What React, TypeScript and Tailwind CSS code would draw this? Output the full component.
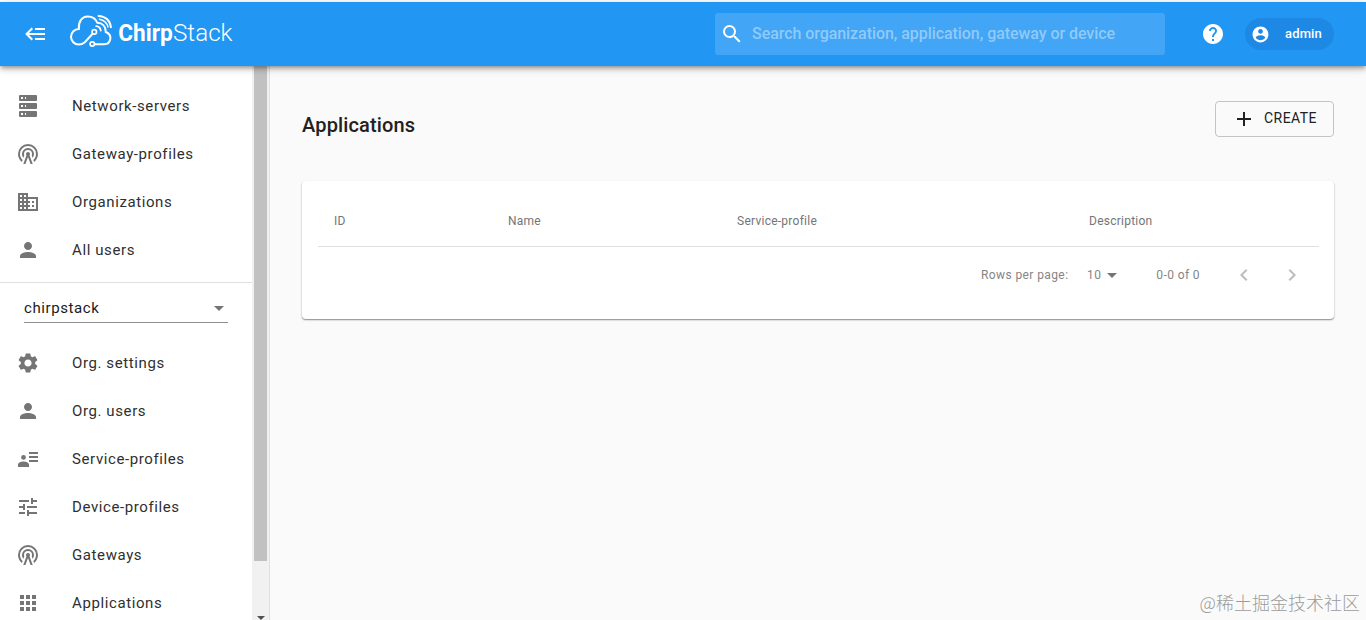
import type { ReactNode } from "react";
import {
  MdAdd,
  MdApps,
  MdArrowDropDown,
  MdChevronLeft,
  MdChevronRight,
  MdDomain,
  MdHelp,
  MdPerson,
  MdSearch,
  MdSettings,
  MdTune,
} from "react-icons/md";

function Glyph({ d, size = 24 }: { d: string; size?: number }) {
  return (
    <svg width={size} height={size} viewBox="0 0 24 24" fill="currentColor" className="shrink-0">
      <path d={d} />
    </svg>
  );
}

const serverPath =
  "M4,1H20A1,1 0 0,1 21,2V6A1,1 0 0,1 20,7H4A1,1 0 0,1 3,6V2A1,1 0 0,1 4,1M4,9H20A1,1 0 0,1 21,10V14A1,1 0 0,1 20,15H4A1,1 0 0,1 3,14V10A1,1 0 0,1 4,9M4,17H20A1,1 0 0,1 21,18V22A1,1 0 0,1 20,23H4A1,1 0 0,1 3,22V18A1,1 0 0,1 4,17M9,5H10V3H9V5M9,13H10V11H9V13M9,21H10V19H9V21M5,3V5H7V3H5M5,11V13H7V11H5M5,19V21H7V19H5Z";
const towerPath =
  "M12,10A2,2 0 0,1 14,12C14,12.5 13.82,12.94 13.53,13.29L16.7,22H14.57L12,14.93L9.43,22H7.3L10.47,13.29C10.18,12.94 10,12.5 10,12A2,2 0 0,1 12,10M12,8A4,4 0 0,0 8,12C8,12.5 8.1,13 8.28,13.46L7.4,15.86C6.53,14.81 6,13.47 6,12A6,6 0 0,1 12,6A6,6 0 0,1 18,12C18,13.47 17.47,14.81 16.6,15.86L15.72,13.46C15.9,13 16,12.5 16,12A4,4 0 0,0 12,8M12,4A8,8 0 0,0 4,12C4,14.36 5,16.5 6.64,17.94L5.92,19.94C3.54,18.11 2,15.23 2,12A10,10 0 0,1 12,2A10,10 0 0,1 22,12C22,15.23 20.46,18.11 18.08,19.94L17.36,17.94C19,16.5 20,14.36 20,12A8,8 0 0,0 12,4Z";
const detailsPath =
  "M7.5,8A2.4,2.4 0 0,1 9.9,10.4A2.4,2.4 0 0,1 7.5,12.8A2.4,2.4 0 0,1 5.1,10.4A2.4,2.4 0 0,1 7.5,8M7.5,14.5C11,14.5 13,16 13,17.5V20H2V17.5C2,16 4,14.5 7.5,14.5M22,13V15H13V13M22,9V11H13V9M22,5V7H13V5Z";
const backPath =
  "M5,13L9,17L7.6,18.42L1.18,12L7.6,5.58L9,7L5,11H21V13H5M21,6V8H11V6H21M21,16V18H11V16H21Z";
const accountPath =
  "M12 2C6.48 2 2 6.48 2 12s4.48 10 10 10 10-4.48 10-10S17.52 2 12 2zm0 3c1.66 0 3 1.34 3 3s-1.34 3-3 3-3-1.34-3-3 1.34-3 3-3zm0 14.2c-2.5 0-4.71-1.28-6-3.22.03-1.99 4-3.08 6-3.08 1.99 0 5.97 1.09 6 3.08-1.29 1.94-3.5 3.22-6 3.22z";

function Logo() {
  return (
    <div className="flex h-9 w-[166px] shrink-0 text-white">
      <svg width="166" height="36" viewBox="0 0 166 36" fill="none" stroke="currentColor" strokeWidth="2" strokeLinecap="round">
        <path d="M24.6 20.8 L16.8 29.2 C15 30.8 13 31.6 10.8 31.6 A7.8 7.8 0 0 1 10.9 15.9 C10.3 8.5 14 3.4 19.6 3.4 C24.5 3.4 27.8 5.6 29.4 9.8 C34.5 10 37.8 13.6 37.8 19 C41 20.2 42.6 22.6 42.4 25.4 C42 29.3 39.3 31.3 36 31.3 H26.6" />
        <circle cx="26.3" cy="18.9" r="2.2" strokeWidth="1.7" />
        <circle cx="24.3" cy="31" r="2.2" strokeWidth="1.7" />
        <path d="M28.2 13.2 C31 13.4 32.4 15.2 32.8 17.6" strokeWidth="1.8" />
        <path d="M30.6 2.9 C37 3 42.2 7.4 42.9 14.2" strokeWidth="2" />
        <path d="M31.4 6.2 C35.8 7 39 9.8 40 14" strokeWidth="1.4" />
        <text x="50.3" y="27.6" fill="currentColor" stroke="none" className="font-['Roboto',sans-serif] text-[23px] font-bold" textLength="54.5" lengthAdjust="spacingAndGlyphs">
          Chirp
        </text>
        <text x="105" y="27.6" fill="currentColor" stroke="none" className="font-['Roboto',sans-serif] text-[23px] font-light" textLength="59.5" lengthAdjust="spacingAndGlyphs">
          Stack
        </text>
      </svg>
    </div>
  );
}

function NavItem({ icon, label }: { icon: ReactNode; label: string }) {
  return (
    <li className="flex h-12 items-center gap-8 pl-4">
      <span className="flex size-6 text-[#757575]">{icon}</span>
      <span className="text-[15px] tracking-[0.6px] text-[#2f2f2f]">{label}</span>
    </li>
  );
}

function Header() {
  return (
    <header className="relative z-10 mt-0.5 flex h-16 shrink-0 items-center bg-[#2196f3] pl-6 text-white shadow-[0_2px_4px_-1px_rgba(0,0,0,0.3),0_4px_5px_0_rgba(0,0,0,0.14),0_1px_10px_0_rgba(0,0,0,0.12)]">
      <Glyph d={backPath} />
      <div className="-mt-1.5 ml-5">
        <Logo />
      </div>
      <div className="ml-auto flex h-[42px] w-[450px] items-center rounded-[3px] bg-[#42a5f5] pl-[5px]">
        <MdSearch size={24} />
        <span className="ml-2 text-[16px] font-medium tracking-[-0.06px] text-[#90caf9]">
          Search organization, application, gateway or device
        </span>
      </div>
      <MdHelp size={24} className="ml-9" />
      <div className="mr-8 ml-5 flex h-8 w-[89px] items-center rounded-full bg-[#1e88e5] pl-1.5">
        <Glyph d={accountPath} size={19} />
        <span className="ml-[15px] text-[13px] font-medium tracking-[0.15px]">admin</span>
      </div>
    </header>
  );
}

function Sidebar() {
  return (
    <aside className="flex w-[270px] shrink-0 overflow-hidden border-r border-[#e0e0e0] bg-white">
      <nav className="w-[252px] shrink-0 pt-2">
        <ul className="border-b border-[#e0e0e0] py-2">
          <NavItem icon={<Glyph d={serverPath} />} label="Network-servers" />
          <NavItem icon={<Glyph d={towerPath} />} label="Gateway-profiles" />
          <NavItem icon={<MdDomain size={24} />} label="Organizations" />
          <NavItem icon={<MdPerson size={24} />} label="All users" />
        </ul>
        <div className="mx-6 mt-2 flex h-8 items-center justify-between border-b border-[#8e8e8e] pt-[3px]">
          <span className="text-[15px] tracking-[0.6px] text-[#1a1a1a]">chirpstack</span>
          <MdArrowDropDown size={24} className="-mr-[3px] text-[#757575]" />
        </div>
        <ul className="pt-4">
          <NavItem icon={<MdSettings size={24} />} label="Org. settings" />
          <NavItem icon={<MdPerson size={24} />} label="Org. users" />
          <NavItem icon={<Glyph d={detailsPath} />} label="Service-profiles" />
          <NavItem icon={<MdTune size={24} />} label="Device-profiles" />
          <NavItem icon={<Glyph d={towerPath} />} label="Gateways" />
          <NavItem icon={<MdApps size={24} />} label="Applications" />
        </ul>
      </nav>
      <div className="flex w-[17px] flex-col items-center bg-[#f1f1f1]">
        <div className="h-[495px] w-[13px] shrink-0 bg-[#c1c1c1]" />
        <svg width="8" height="4" viewBox="0 0 8 4" className="mt-[55px] shrink-0">
          <path d="M0 0H8L4 4Z" fill="#505050" />
        </svg>
      </div>
    </aside>
  );
}

export default function App() {
  return (
    <div className="flex h-[620px] w-[1366px] flex-col overflow-hidden bg-white font-['Roboto',sans-serif]">
      <Header />
      <div className="flex min-h-0 flex-1">
        <Sidebar />
        <main className="flex flex-1 flex-col bg-[#fafafa] pr-8 pl-8">
          <div className="flex items-start justify-between pt-[35px]">
            <h1 className="mt-[9px] text-[20px] leading-[30px] font-medium tracking-[0.15px] text-[#212121]">Applications</h1>
            <button className="flex h-9 w-[119px] items-center rounded-[4px] border border-[#c4c4c4] pl-4 text-[#212121]">
              <MdAdd size={24} />
              <span className="-mt-px ml-2 text-[14px] tracking-[0.45px]">CREATE</span>
            </button>
          </div>
          <section className="mt-[41px] h-[138px] rounded-[4px] bg-white pr-[15px] pl-4 pt-2.5 shadow-[0_1px_1px_0_rgba(0,0,0,0.2),0_1px_2px_0_rgba(0,0,0,0.3)]">
            <div className="grid h-[56px] grid-cols-[174px_229px_352px_1fr] items-center border-b border-[#e0e0e0] pt-[5px] pl-4 text-[12px] tracking-[0.25px] text-[#757575]">
              <span>ID</span>
              <span>Name</span>
              <span>Service-profile</span>
              <span>Description</span>
            </div>
            <div className="flex h-14 items-center pl-[663px] text-[12px] tracking-[0.4px] text-[#858585]">
              <span className="w-[106px]">Rows per page:</span>
              <span>10</span>
              <MdArrowDropDown size={24} className="-ml-px text-[#757575]" />
              <span className="ml-8 w-[76px]">0-0 of 0</span>
              <MdChevronLeft size={24} className="shrink-0 text-[#bdbdbd]" />
              <MdChevronRight size={24} className="ml-6 shrink-0 text-[#bdbdbd]" />
            </div>
          </section>
          <footer className="mt-auto -mr-[26px] mb-1.5 self-end font-['Noto_Sans_CJK_SC',sans-serif] text-[18px] leading-6 font-light whitespace-nowrap text-[#9c9c9c]">
            @稀土掘金技术社区
          </footer>
        </main>
      </div>
    </div>
  );
}
